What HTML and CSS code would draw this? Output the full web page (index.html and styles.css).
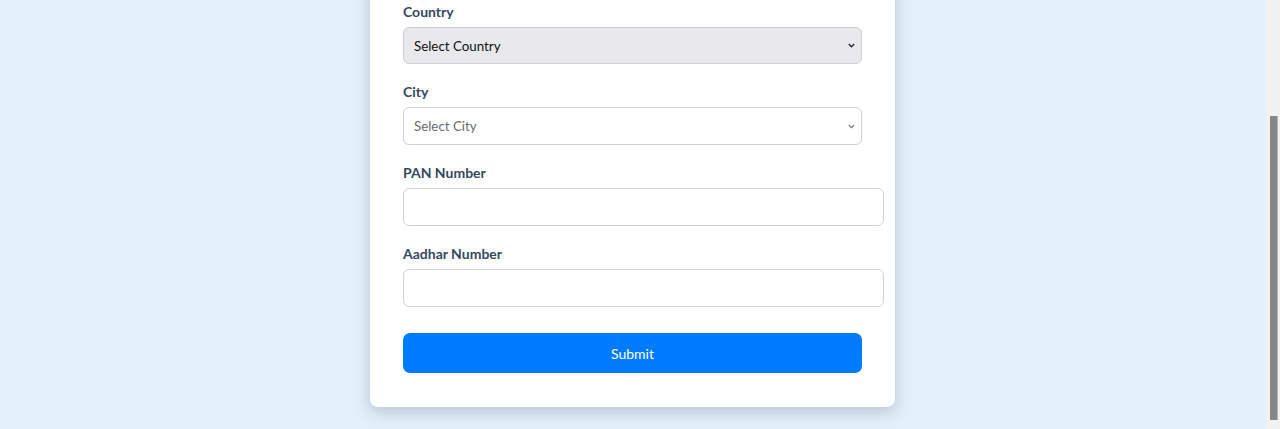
FILE: index.html
```html
<!DOCTYPE html>
<html lang="en">
<head>
<meta charset="utf-8">
<title>Registration Form</title>
<link rel="stylesheet" href="styles.css">
</head>
<body>
<main class="page">
  <form class="card">
    <h2 class="title">Registration Form</h2>
    <div class="group">
      <label class="label" for="name">Full Name</label>
      <input class="field" id="name" type="text">
    </div>
    <div class="group">
      <label class="label" for="country">Country</label>
      <select class="select select-country" id="country">
        <option>Select Country</option>
      </select>
    </div>
    <div class="group">
      <label class="label" for="city">City</label>
      <select class="select select-city" id="city">
        <option>Select City</option>
      </select>
    </div>
    <div class="group">
      <label class="label" for="pan">PAN Number</label>
      <input class="field" id="pan" type="text">
    </div>
    <div class="group">
      <label class="label" for="aadhar">Aadhar Number</label>
      <input class="field" id="aadhar" type="text">
    </div>
    <button class="submit" type="button">Submit</button>
  </form>
</main>
<div class="scrollbar" aria-hidden="true"><div class="thumb"></div></div>
<script src="script.js"></script>
</body>
</html>
```
FILE: styles.css
```css
html, body {
  margin: 0;
  padding: 0;
  background: #e3f0fb;
  font-family: Lato, "Open Sans", sans-serif;
}

.page {
  display: flex;
  justify-content: center;
  margin-right: 15px;
  padding: 20px 0 22px;
}

.card {
  width: 459px;
  padding: 33px 33px 34px;
  background: #ffffff;
  border-radius: 8px;
  box-shadow: 0 5px 15px rgba(50, 70, 90, 0.25);
}

.title {
  margin: 0 0 20px;
  font-size: 22px;
  color: #2c3e50;
  text-align: center;
}

.group {
  margin-bottom: 20px;
}

.label {
  display: block;
  margin-bottom: 8px;
  font-size: 14px;
  line-height: 15px;
  font-weight: 700;
  color: #34495e;
}

.select {
  display: block;
  width: 100%;
  height: 38px;
  padding: 0 24px 0 10px;
  font-family: inherit;
  font-size: 13.33px;
  border: 1px solid #cfcfd4;
  border-radius: 6px;
  -webkit-appearance: none;
  appearance: none;
  background-repeat: no-repeat;
  background-position: right 6px center;
  background-size: 7px 5px;
}

.select-country {
  height: 37px;
  background-color: #e9e9ed;
  color: #111111;
  background-image: url("data:image/svg+xml,%3Csvg xmlns='http://www.w3.org/2000/svg' viewBox='0 0 7 5'%3E%3Cpath d='M0.8 1l2.7 2.7L6.2 1' fill='none' stroke='%23222' stroke-width='1.4'/%3E%3C/svg%3E");
}

.select-city {
  background-color: #ffffff;
  color: #6b6b6b;
  background-image: url("data:image/svg+xml,%3Csvg xmlns='http://www.w3.org/2000/svg' viewBox='0 0 7 5'%3E%3Cpath d='M0.8 1l2.7 2.7L6.2 1' fill='none' stroke='%23777' stroke-width='1.1'/%3E%3C/svg%3E");
}

.field {
  display: block;
  width: 100%;
  padding: 10px;
  font-family: inherit;
  font-size: 14px;
  line-height: 16px;
  border: 1px solid #cfd2d4;
  border-radius: 6px;
  background: #ffffff;
}

.submit {
  display: block;
  width: 100%;
  height: 40px;
  margin-top: 26px;
  border: none;
  border-radius: 7px;
  background: #007bff;
  color: #ffffff;
  font-family: inherit;
  font-size: 14px;
}

.scrollbar {
  position: fixed;
  top: 0;
  right: 0;
  bottom: 0;
  width: 14px;
  background: #f1f1f1;
}

.thumb {
  position: absolute;
  top: 116px;
  left: 4px;
  width: 7px;
  height: 304px;
  background: #868686;
  border-right: 1px solid #b5b5b5;
}
```
FILE: script.js
```js
window.scrollTo(0, document.documentElement.scrollHeight);
```
